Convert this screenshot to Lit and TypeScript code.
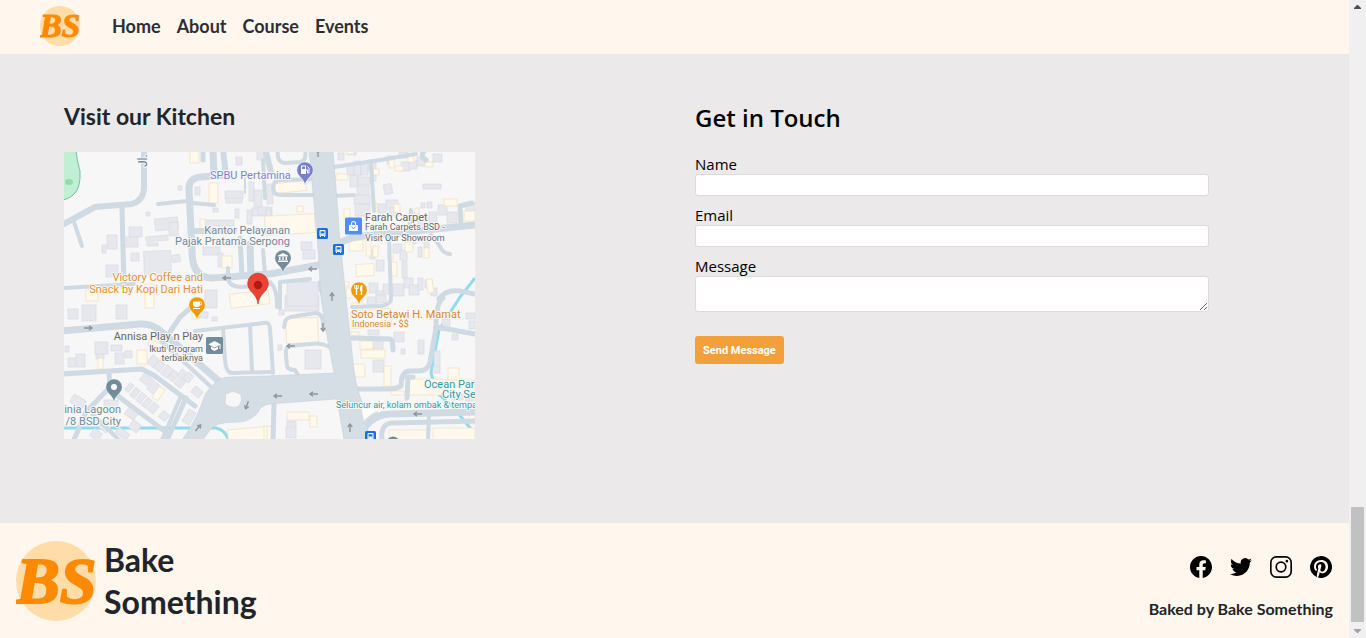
import { LitElement, html, css, svg } from "lit";
import { customElement } from "lit/decorators.js";

type Rect = [number, number, number, number, number?];

const WATER = ["M411 126L396 145L375 178L367 221L372 240L389 255L407 277", "M0 276L152 276Q161 278 164 287"];

const ROADS: [number, string][] = [
  [6, "M80 -2L80 32Q81 48 68 52L31 55L9 67L-4 74"],
  [4, "M9 67L18 94"],
  [5, "M58 56L60 136"],
  [4, "M94 52L123 49"],
  [4, "M128 51L150 53"],
  [7, "M160 23L137 25Q124 26 125 38L128 99Q128 126 148 126L206 122L260 112"],
  [6, "M129 79L170 79"],
  [7, "M149 -2L150 23"],
  [6, "M159 -2L162 23"],
  [5, "M139 -2L139 8"],
  [2, "M181 26L181 41"],
  [4, "M199 8L201 46"],
  [5, "M176 86L178 124"],
  [7, "M186 92L187 125"],
  [4, "M199 98L201 122"],
  [4, "M164 116L164 127Q166 135 178 135L206 132"],
  [4, "M214 -2Q212 11 222 11L236 10Q243 9 241 -2"],
  [4, "M250 27L216 28Q209 29 209 36L210 40Q211 43 218 43L250 43"],
  [6, "M202 0L207 20"],
  [7, "M-2 179L76 172Q88 171 98 180L156 230"],
  [4, "M92 184L146 234"],
  [4, "M-2 136L70 132"],
  [5, "M-2 222L78 217L91 224L131 254"],
  [5, "M45 221L46 235L22 260L9 290"],
  [5, "M46 238L103 281"],
  [5, "M122 246L103 288"],
  [4, "M117 244L98 288"],
  [4, "M28 262L55 288"],
  [4, "M131 179L200 171Q206 170 206 177L209 221"],
  [4, "M159 176L161 208Q162 221 168 221L206 220"],
  [4, "M186 173L188 220"],
  [5, "M106 180L116 165L130 153"],
  [4, "M220 175L221 170Q222 165 232 164L252 161Q260 162 259 174L268 184"],
  [4, "M266 195Q256 190 246 192L226 194Q221 195 222 203L223 214Q224 218 231 218L234 223"],
  [4, "M216 156L216 130L246 127"],
  [4, "M206 130Q214 138 213 155"],
  [4, "M256 130Q255 144 268 152"],
  [5, "M289 186L326 187Q329 187 329 198"],
  [5, "M375 147Q382 137 396 139L411 142"],
  [5, "M411 182L372 175"],
  [5, "M379 146Q372 150 372 176L366 210Q364 219 354 219L345 219Q337 220 337 234Q333 237 322 237L295 237"],
  [5, "M342 225L349 225M344 225L343 246"],
  [7, "M272 93Q286 84 310 83L352 79L411 73"],
  [4, "M375 93Q379 102 386 102M367 83L375 93"],
  [4, "M325 86L327 145Q328 152 318 154L288 155"],
  [5, "M397 74L396 54L408 51"],
  [4, "M270 15L310 9L352 2"],
  [4, "M307 13L310 59"],
  [4, "M270 44L290 43"],
  [4, "M345 80L347 58"],
  [5, "M362 8Q355 4 361 -2"],
  [7, "M302 274Q312 262 326 262L411 260"],
  [5, "M318 288Q316 272 328 271L411 269"],
  [4, "M365 262L364 288"],
  [5, "M210 252L209 288"],
];

const GREY: Rect[] = [
  [172, 5, 6, 8], [193, -2, 7, 10], [161, 39, 18, 8], [162, 46, 16, 5], [131, 35, 5, 8], [114, 34, 4, 4], [185, 30, 5, 19], [190, 38, 8, 17],
  [188, 56, 15, 8], [171, 57, 4, 9], [149, 56, 5, 4], [183, 58, 5, 14], [82, 60, 4, 4], [91, 66, 23, 12, -5], [105, 70, 9, 14],
  [65, 75, 13, 10], [62, 85, 12, 10], [43, 83, 10, 14], [38, 93, 4, 8], [82, 84, 22, 5, -5], [83, 91, 11, 3], [67, 101, 8, 8],
  [80, 99, 27, 24, -2], [108, 103, 8, 7, -10], [42, 113, 12, 12], [140, 68, 30, 6], [139, 95, 17, 8], [154, 101, 5, 14],
  [4, 157, 10, 10], [18, 153, 14, 16], [52, 153, 11, 14], [1, 194, 4, 6], [4, 206, 7, 9], [12, 202, 9, 13], [31, 190, 13, 12],
  [47, 193, 11, 6], [32, 202, 8, 5], [51, 201, 9, 11], [61, 199, 7, 7], [141, 138, 12, 18], [131, 160, 13, 6], [148, 165, 5, 4],
  [85, 204, 8, 10, 40], [92, 209, 7, 10, 40], [99, 214, 8, 11, 40], [106, 219, 7, 10, 40], [112, 226, 8, 9, 40], [121, 221, 7, 9, 40], [115, 218, 6, 8, 40],
  [63, 231, 5, 9, 40], [68, 236, 6, 10, 40], [74, 241, 6, 10, 40], [80, 246, 6, 10, 40], [86, 251, 7, 10, 40], [77, 223, 10, 9, 40], [85, 230, 9, 11, 40],
  [7, 245, 14, 9, 30], [40, 248, 14, 9], [62, 257, 11, 9, 35], [66, 270, 10, 9, 35], [36, 270, 10, 9, 38], [27, 278, 10, 9, 38], [96, 260, 8, 8, 40], [52, 278, 13, 7, 35],
  [121, 258, 8, 14, 30], [128, 236, 10, 8, 40], [194, 55, 14, 8], [203, 32, 6, 20], [202, 57, 5, 7],
  [226, 129, 18, 16], [221, 143, 34, 16], [223, 130, 31, 24], [215, 158, 5, 5], [241, 198, 16, 19], [214, 193, 4, 5], [237, 90, 11, 8], [239, 98, 12, 9],
  [274, 1, 6, 7], [284, -2, 8, 5], [283, 13, 7, 10], [290, 9, 7, 15], [297, 11, 7, 12], [304, 8, 8, 11], [286, 23, 8, 12], [294, 25, 12, 8], [307, 21, 5, 8],
  [293, 34, 12, 10], [290, 43, 16, 9], [291, 52, 15, 12], [320, 32, 8, 10, -12], [359, 32, 18, 5], [314, 52, 9, 9], [322, 48, 12, 8], [325, 56, 10, 8],
  [337, 10, 9, 9], [345, 9, 8, 8], [353, 5, 8, 9], [369, 2, 9, 8], [335, 0, 9, 6], [323, 4, 6, 8], [357, 51, 4, 5], [363, 50, 5, 6],
  [383, 60, 10, 11], [374, 53, 9, 10], [365, 60, 8, 12], [354, 64, 10, 9], [350, 60, 5, 8], [402, 51, 9, 8], [329, 92, 9, 9], [336, 98, 7, 10], [345, 86, 7, 6],
  [354, 95, 4, 10], [360, 86, 5, 10], [338, 109, 5, 17], [312, 108, 8, 11], [306, 98, 5, 9], [329, 132, 11, 12], [340, 126, 9, 10], [345, 133, 10, 10], [354, 126, 5, 12],
  [361, 128, 7, 8], [367, 136, 6, 8], [305, 131, 9, 10], [312, 139, 8, 9], [319, 132, 7, 10], [303, 145, 9, 8], [312, 143, 10, 8],
  [330, 180, 10, 10], [304, 178, 11, 5], [309, 189, 10, 8], [309, 208, 11, 12], [337, 197, 4, 5], [354, 188, 6, 14], [378, 167, 8, 7], [388, 182, 6, 6],
  [370, 199, 6, 15], [369, 215, 7, 6], [402, 161, 9, 6], [405, 169, 6, 8], [389, 240, 10, 8], [402, 244, 8, 5], [223, 269, 9, 5], [222, 275, 10, 11],
];

const CREAM: Rect[] = [
  [126, -2, 9, 13], [145, 31, 9, 20], [136, 67, 5, 11], [158, 104, 10, 12], [81, 132, 9, 24], [22, 138, 12, 11], [166, 140, 39, 14, -7], [128, 160, 6, 7],
  [34, 206, 5, 11], [73, 198, 10, 14], [84, 190, 16, 6, 25], [91, 235, 7, 13, 35], [164, 276, 44, 16, -5], [201, 63, 50, 19, -3], [233, 54, 6, 6], [211, 30, 31, 10, -6],
  [282, -2, 8, 4], [272, 22, 12, 6], [309, 17, 6, 6], [325, 7, 5, 9], [331, 14, 8, 5], [344, 4, 6, 6], [361, 10, 8, 5], [309, 51, 4, 8], [280, 57, 6, 10], [330, 52, 6, 8],
  [351, 56, 4, 6], [380, 47, 13, 7], [400, 59, 11, 10], [285, 88, 14, 11], [302, 89, 5, 15], [309, 94, 5, 11], [324, 99, 5, 9], [341, 90, 8, 10], [360, 96, 5, 10],
  [292, 112, 18, 12, -3], [325, 110, 8, 14], [363, 127, 6, 14, -8], [279, 130, 6, 4], [282, 136, 6, 10], [222, 166, 32, 25, -2], [288, 151, 11, 6], [287, 158, 40, 17, -5],
  [287, 180, 8, 4], [296, 189, 13, 8], [297, 198, 24, 8], [289, 212, 12, 13], [320, 214, 7, 20], [327, 239, 13, 4], [345, 227, 34, 16], [384, 216, 11, 17], [381, 228, 30, 14],
  [223, 260, 22, 8], [246, 264, 7, 11], [325, 278, 38, 12], [369, 276, 42, 13], [405, 263, 6, 9], [200, 274, 3, 14],
];

/* Traffic direction marks: x, y and heading in degrees. */
const ARROWS: [number, number, number][] = [
  [24, 176, 0], [134, 276, -50], [183, 253, 110], [214, 244, 180], [250, 242, 180], [249, 117, 180],
  [163, 126, 180], [268, 145, -90], [259, 175, 90], [227, 194, 180], [286, 276, -90], [354, 262, 180], [254, 1, -90],
];

const LABELS: [number, number, number, string, string, string][] = [
  [146, 27, 11, "start", "#7b83cf", "SPBU Pertamina"],
  [226, 82, 11, "end", "#72899a", "Kantor Pelayanan"],
  [226, 93, 11, "end", "#72899a", "Pajak Pratama Serpong"],
  [139, 129, 11, "end", "#e5902f", "Victory Coffee and"],
  [139, 141, 11, "end", "#e5902f", "Snack by Kopi Dari Hati"],
  [301, 69, 11, "start", "#666", "Farah Carpet"],
  [301, 78, 9, "start", "#666", "Farah Carpets BSD -"],
  [301, 89, 9, "start", "#666", "Visit Our Showroom"],
  [139, 188, 11, "end", "#666", "Annisa Play n Play"],
  [139, 200, 9, "end", "#666", "Ikuti Program"],
  [139, 209, 9, "end", "#666", "terbaiknya"],
  [57, 261, 11, "end", "#72899a", "inia Lagoon"],
  [57, 273, 11, "end", "#72899a", "/8 BSD City"],
  [287, 166, 11, "start", "#dc8431", "Soto Betawi H. Mamat"],
  [288, 175, 9, "start", "#dc8431", "Indonesia • $$"],
  [360, 236, 11, "start", "#2e9da3", "Ocean Par"],
  [378, 246, 11, "start", "#2e9da3", "City Se"],
  [272, 256, 9, "start", "#2e9da3", "Seluncur air, kolam ombak & tempat"],
];

const rects = (list: Rect[], name: string) =>
  list.map(
    ([x, y, w, h, r = 0]) =>
      svg`<rect class=${name} x=${x} y=${y} width=${w} height=${h} transform="rotate(${r} ${x + w / 2} ${y + h / 2})"/>`,
  );

const pin = (x: number, y: number, color: string, glyph: unknown) => svg`
  <g transform="translate(${x} ${y})">
    <path fill=${color} stroke="#fff" stroke-width=".5" d="M0 15.500C-.9 10.500-3 9-5.700 6A8.200 8.200 0 1 1 5.700 6C3 9 .9 10.500 0 15.500Z"/>
    ${glyph}
  </g>`;

const bus = (x: number, y: number) => svg`
  <g transform="translate(${x} ${y})">
    <rect width="11" height="11" rx="1.500" fill="#1a6fe0"/>
    <path fill="#fff" fill-rule="evenodd" d="M2.500 3Q2.500 2 3.500 2H7.500Q8.500 2 8.500 3V8H8V9H7V8H4V9H3V8H2.500ZM3.500 3.200V5.500H7.500V3.200ZM3.500 6.400V7.200H4.500V6.400ZM6.500 6.400V7.200H7.500V6.400Z"/>
  </g>`;

@customElement("kitchen-map")
export class KitchenMap extends LitElement {
  static styles = css`
    :host { display: block; width: 411px; max-width: 100%; }
    .map { display: block; width: 100%; height: auto; background: #f7f7f7; }
    .road { fill: none; stroke: #cfdae3; stroke-linecap: round; stroke-linejoin: round; }
    .wide { fill: #d5dee5; stroke: #c3cfd9; stroke-width: 0.5px; }
    .water { fill: none; stroke: #8edcec; stroke-width: 3px; }
    .grey { fill: #e7e8ed; stroke: #d5d8e4; stroke-width: 0.6px; }
    .cream { fill: #fef9ec; stroke: #f0dfbd; stroke-width: 0.7px; }
    .arrow { fill: none; stroke: #8e959b; stroke-width: 1.4px; }
    .label { font-family: Roboto, sans-serif; stroke: #f8f8f8; stroke-width: 2px; paint-order: stroke; stroke-linejoin: round; }
  `;

  render() {
    return html`
      <svg class="map" viewBox="0 0 411 287" role="img" aria-label="Map of our kitchen">
        <path fill="#c0efd4" stroke="#72c2a2" d="M-1-1H12Q13 9 16 19Q17 37 9 43Q5 47-1 48Z" />
        <ellipse cx="5" cy="30" rx="4" ry="3" fill="#93dcae" />
        ${WATER.map((d) => svg`<path class="water" d=${d}/>`)}
        ${rects(GREY, "grey")} ${rects(CREAM, "cream")}
        ${ROADS.map(([w, d]) => svg`<path class="road" stroke-width=${w} d=${d}/>`)}
        <path class="wide" d="M245-1H269L274 60L275 78L282 146L290 218Q293 238 298 250Q306 263 314 260Q305 266 302 272L307 288H280L273 247L206 252Q196 254 195 259Q187 270 174 270Q150 270 146 278L139 288H118Q132 268 138 251Q141 240 148 234Q155 225 165 225L202 224L270 221L264 190L257 146L253 83Z" />
        <path fill="#f7f7f7" stroke="#c3cfd9" stroke-width=".5" d="M162 242Q170 237 177 243Q179 251 173 255Q164 256 161 251Z" />
        <path fill="#fff" d="M297 252L313 259Q303 264 300 269Z" />
        ${ARROWS.map(([x, y, r]) => svg`<path class="arrow" d="M-4 0H4M1-2.200L4 0L1 2.200" transform="translate(${x} ${y}) rotate(${r})"/>`)}
        <text class="label" font-size="12" fill="#667b8b" transform="translate(83 15) rotate(-90)">Jl.</text>
        ${LABELS.map(([x, y, size, anchor, color, text]) => svg`<text class="label" x=${x} y=${y} font-size=${size} text-anchor=${anchor} fill=${color}>${text}</text>`)}
        ${pin(241, 18, "#7780ca", svg`<path fill="#fff" fill-rule="evenodd" d="M-4-4.500H1V4H-4ZM-3-3.500V-1H0V-3.500Z"/><path fill="none" stroke="#fff" d="M1 0H2.500V3H4V-2L2.500-3.500"/>`)}
        ${pin(219, 106, "#728d99", svg`<path fill="#fff" d="M0-5L5-2.500V-1.500H-5V-2.500ZM-4-1H-2.500V2H-4ZM-.7-1H.7V2H-.7ZM2.500-1H4V2H2.500ZM-5 2.500H5V4H-5Z"/>`)}
        ${pin(133, 153, "#f29900", svg`<path fill="#fff" d="M-4-3.500H3Q5-3.500 5-1.500Q5 .5 3 .5Q2 2-1 2Q-4 2-4-1ZM-4 3H3V4H-4Z"/><rect x="3" y="-2.500" width="1" height="2" fill="#f29900"/>`)}
        ${pin(295, 138, "#f29900", svg`<path fill="none" stroke="#fff" stroke-width="1.500" d="M-2.500-1V5M2.500-5V5"/><path fill="none" stroke="#fff" d="M-4.200-5V-1.500H-.8V-5M-2.500-5V-1"/><path fill="#fff" d="M3.200-5V1H1V-2Q1-4 3.200-5Z"/>`)}
        ${pin(50, 235, "#728d99", svg`<circle r="3" fill="#fff"/>`)}
        <path fill="#ea4335" stroke="#b8332a" stroke-width=".7" d="M194 152C193 144 189 142 186 138A10.300 10.300 0 1 1 202 138C199 142 195 144 194 152Z" />
        <circle cx="194" cy="133" r="4.200" fill="#b11a12" />
        <rect x="281" y="65.500" width="17" height="17" rx="1.500" fill="#518df5" />
        <path fill="#fff" d="M285 73H294V79H285Z" />
        <path fill="none" stroke="#fff" stroke-width="1.200" d="M287.500 74V71.500Q287.500 69.500 289.500 69.500Q291.500 69.500 291.500 71.500V74" />
        <path fill="none" stroke="#518df5" d="M287.500 75Q289.500 78 291.500 75" />
        <rect x="142" y="185" width="17" height="17" rx="1.500" fill="#728d99" />
        <path fill="#fff" d="M150.500 189L156.500 192.200V197H155.500V193L150.500 195.700L144.500 192.200ZM147 194.500L150.500 196.500L154 194.500V197L150.500 199L147 197Z" />
        ${bus(253, 76)} ${bus(269, 92)} ${bus(301, 279)}
        <circle cx="329" cy="291" r="6.500" fill="#728d99" />
      </svg>
    `;
  }
}

@customElement("brand-logo")
export class BrandLogo extends LitElement {
  static styles = css`
    :host { display: block; flex: none; }
    .logo { display: block; width: 100%; height: 100%; }
    .mark { font: italic bold 66px "Liberation Serif", serif; fill: #ff8a00; stroke: #ff8a00; stroke-width: 2px; stroke-linejoin: round; }
  `;

  render() {
    return html`
      <svg class="logo" viewBox="0 0 80 80" role="img" aria-label="Bake Something">
        <circle cx="40" cy="40" r="40" fill="#ffdca8" />
        <text class="mark" x="40" y="62" text-anchor="middle">BS</text>
      </svg>
    `;
  }
}

const SOCIAL = [
  { name: "Facebook", d: "M24 12.070C24 5.410 18.630 0 12 0S0 5.410 0 12.070C0 18.100 4.390 23.090 10.130 24V15.560H7.080V12.070H10.130V9.410C10.130 6.390 11.920 4.720 14.660 4.720C15.970 4.720 17.350 4.950 17.350 4.950V7.920H15.830C14.340 7.920 13.870 8.850 13.870 9.810V12.070H17.200L16.670 15.560H13.870V24C19.610 23.090 24 18.100 24 12.070Z" },
  { name: "Twitter", d: "M23.950 4.570a10 10 0 0 1-2.820.77 4.960 4.960 0 0 0 2.160-2.720c-.95.550-2 .950-3.130 1.180a4.920 4.920 0 0 0-8.380 4.480C7.690 8.100 4.070 6.130 1.640 3.160a4.820 4.820 0 0 0-.67 2.480c0 1.710.87 3.210 2.190 4.100a4.900 4.900 0 0 1-2.230-.620v.06a4.920 4.920 0 0 0 3.950 4.830 5 5 0 0 1-2.210.080 4.940 4.940 0 0 0 4.600 3.420A9.870 9.870 0 0 1 0 19.540a13.990 13.990 0 0 0 7.550 2.210c9.050 0 14-7.500 14-13.980 0-.21 0-.42-.020-.630a9.940 9.940 0 0 0 2.420-2.570Z" },
  { name: "Instagram", d: "M7 0H17A7 7 0 0 1 24 7V17A7 7 0 0 1 17 24H7A7 7 0 0 1 0 17V7A7 7 0 0 1 7 0ZM7 1.800A5.200 5.200 0 0 0 1.800 7V17A5.200 5.200 0 0 0 7 22.200H17A5.200 5.200 0 0 0 22.200 17V7A5.200 5.200 0 0 0 17 1.800ZM12 5.840A6.160 6.160 0 1 1 12 18.160A6.160 6.160 0 1 1 12 5.840ZM12 7.700A4.300 4.300 0 1 0 12 16.300A4.300 4.300 0 1 0 12 7.700ZM18.400 4.150A1.450 1.450 0 1 1 18.400 7.050A1.450 1.450 0 1 1 18.400 4.150Z" },
  { name: "Pinterest", d: "M12 0a12 12 0 0 0-4.370 23.170c-.1-.95-.2-2.400.04-3.440l1.410-5.960s-.36-.72-.36-1.780c0-1.670.97-2.910 2.170-2.910 1.020 0 1.520.77 1.520 1.690 0 1.030-.66 2.570-1 4-.28 1.190.6 2.170 1.780 2.170 2.130 0 3.770-2.250 3.770-5.490 0-2.870-2.060-4.880-5.010-4.880-3.410 0-5.410 2.560-5.410 5.200 0 1.030.4 2.140.89 2.740.1.120.11.220.08.340l-.33 1.360c-.05.220-.17.270-.4.160-1.500-.7-2.430-2.890-2.430-4.650 0-3.780 2.750-7.260 7.930-7.260 4.160 0 7.400 2.970 7.400 6.930 0 4.140-2.610 7.460-6.230 7.460-1.220 0-2.360-.63-2.750-1.380l-.75 2.850c-.27 1.040-1 2.350-1.490 3.150A12 12 0 1 0 12 0Z" },
];

@customElement("app-root")
export class AppRoot extends LitElement {
  static styles = css`
    :host {
      display: flex;
      min-height: 100vh;
      font-family: "Open Sans", "Noto Sans", sans-serif;
      color: #000;
      --brand: Lato, "Open Sans", sans-serif;
      --cream: #fff6ee;
      --ink: #212529;
    }
    * { box-sizing: border-box; }
    .page { flex: 1; min-width: 0; display: flex; flex-direction: column; }
    .nav { display: flex; align-items: center; gap: 32px; height: 54px; padding: 0 40px 2px; background: var(--cream); }
    .nav-logo { width: 40px; height: 40px; }
    .links { display: flex; gap: 16px; }
    .link { font: bold 18px/24px var(--brand); color: #2b2f33; text-decoration: none; }
    .contact { flex: 1; display: grid; grid-template-columns: 1fr 1fr; gap: 41px; padding: 48px 64px 84px; background: #ebe9ea; align-items: start; }
    .visit-title { margin: 0 0 22px; font: bold 23px/28px var(--brand); color: var(--ink); }
    .touch-title { margin: 0 0 20px; font-size: 24px; line-height: 31px; font-weight: 600; }
    .form { display: flex; flex-direction: column; align-items: flex-start; }
    .label { padding-top: 2px; font-size: 15px; line-height: 19px; }
    .field { width: 100%; max-width: 514px; height: 22px; margin: 0 0 8px; padding: 2px 4px; border: 1px solid #dcdcdc; border-radius: 3px; background: #fff; font: 13px "Liberation Sans", sans-serif; }
    .area { height: 36px; margin-bottom: 24px; resize: vertical; }
    .send { height: 28px; padding: 0 8px; border: 0; border-radius: 3px; background: #f4a03a; color: #fff; font: bold 11px Roboto, sans-serif; }
    .footer { display: flex; justify-content: space-between; align-items: flex-start; padding: 16px 16px 15px; background: var(--cream); color: var(--ink); }
    .brand { display: flex; align-items: center; gap: 8px; }
    .footer-logo { width: 80px; height: 80px; }
    .name { width: min-content; margin: 0; font: bold 32px/42px var(--brand); }
    .side { display: flex; flex-direction: column; align-items: flex-end; gap: 20px; padding-top: 17px; }
    .social { display: flex; gap: 18px; padding-right: 1px; }
    .social-link { display: block; color: #000; }
    .icon { display: block; width: 22px; height: 22px; }
    .credit { margin: 0; font: bold 16px/22px var(--brand); }
    .scroll { display: flex; flex-direction: column; align-items: center; justify-content: space-between; width: 17px; padding: 5px 0; background: #f0f0f0; }
    .thumb { width: 13px; height: 115px; margin: auto 0 7px; background: #c1c1c1; }
    .caret { display: block; width: 7px; height: 4px; }
  `;

  render() {
    return html`
      <div class="page">
        <nav class="nav">
          <brand-logo class="nav-logo"></brand-logo>
          <div class="links">
            ${["Home", "About", "Course", "Events"].map((t) => html`<a class="link" href="#">${t}</a>`)}
          </div>
        </nav>
        <main class="contact">
          <section>
            <h2 class="visit-title">Visit our Kitchen</h2>
            <kitchen-map></kitchen-map>
          </section>
          <section>
            <h2 class="touch-title">Get in Touch</h2>
            <form class="form">
              <label class="label" for="name">Name</label>
              <input class="field" id="name" type="text" />
              <label class="label" for="email">Email</label>
              <input class="field" id="email" type="email" />
              <label class="label" for="message">Message</label>
              <textarea class="field area" id="message"></textarea>
              <button class="send" type="button">Send Message</button>
            </form>
          </section>
        </main>
        <footer class="footer">
          <div class="brand">
            <brand-logo class="footer-logo"></brand-logo>
            <p class="name">Bake Something</p>
          </div>
          <div class="side">
            <div class="social">
              ${SOCIAL.map(
                (s) => html`<a class="social-link" href="#" aria-label=${s.name}>
                  <svg class="icon" viewBox="0 0 24 24" fill="currentColor" fill-rule="evenodd"><path d=${s.d} /></svg>
                </a>`,
              )}
            </div>
            <p class="credit">Baked by Bake Something</p>
          </div>
        </footer>
      </div>
      <div class="scroll" aria-hidden="true">
        <svg class="caret" viewBox="0 0 7 4"><path fill="#505050" d="M3 0H4L7 3V4H0V3Z" /></svg>
        <div class="thumb"></div>
        <svg class="caret" viewBox="0 0 7 4"><path fill="#a3a3a3" d="M0 0H7V1L4 4H3L0 1Z" /></svg>
      </div>
    `;
  }
}
